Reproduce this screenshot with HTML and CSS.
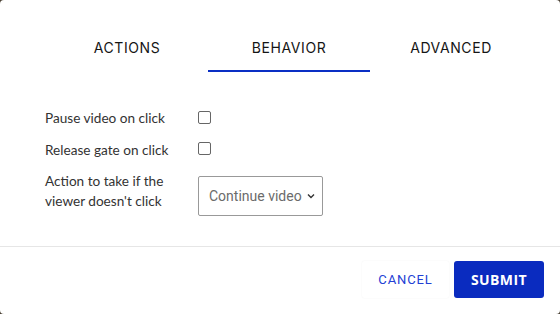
FILE: index.html
```html
<!DOCTYPE html>
<html>
<head>
    <link rel="stylesheet" href="styles.css">
</head>
<body>
    <div class="modal">
        <div class="tabs">
            <div class="tab">ACTIONS</div>
            <div class="tab active">BEHAVIOR</div>
            <div class="tab">ADVANCED</div>
        </div>

        <div class="form">
            <div class="row">
                <label class="label" for="pause">Pause video on click</label>
                <input type="checkbox" id="pause">
            </div>
            <div class="row">
                <label class="label" for="release">Release gate on click</label>
                <input type="checkbox" id="release">
            </div>
            <div class="row">
                <label class="label" for="action">Action to take if the viewer doesn't click</label>
                <div class="select">
                    <span>Continue video</span>
                    <svg width="10" height="10" viewBox="0 0 10 10"><path d="M2 3.5 L5 6.5 L8 3.5" fill="none" stroke="#333" stroke-width="1.4"/></svg>
                </div>
            </div>
        </div>

        <div class="footer">
            <button class="btn cancel">CANCEL</button>
            <button class="btn submit">SUBMIT</button>
        </div>
    </div>
</body>
</html>
```

FILE: styles.css
```css
body { margin: 0; background: #4a4034; }
.modal { width: 560px; height: 314px; background: #fff; border-radius: 4px; display: flex; flex-direction: column; overflow: hidden; }

.tabs { display: flex; margin: 30px 0 0 46px; }
.tab { width: 162px; padding: 9px 0 13px; border-bottom: 2px solid transparent; text-align: center; font-family: Inter, 'Liberation Sans', sans-serif; font-size: 14px; line-height: 18px; letter-spacing: 0.6px; color: #151515; }
.tab.active { border-bottom-color: #0a2fc4; }

.form { display: flex; flex-direction: column; gap: 12px; margin: 37px 0 0 45px; flex: 1; }
.row { display: flex; align-items: flex-start; }
.label { width: 153px; font-family: Lato, 'Open Sans', sans-serif; font-size: 13.6px; line-height: 19.5px; color: #333; }
.row input[type=checkbox] { width: 13px; height: 13px; margin: 1.5px 0 0; appearance: none; border: 1px solid #666; border-radius: 2px; background: #fff; }
.select { width: 107px; height: 38px; margin-top: 4px; border: 1px solid #999; border-radius: 2px; display: flex; align-items: center; justify-content: space-between; padding: 0 6px 0 10px; font-family: Roboto, 'Liberation Sans', sans-serif; font-size: 14px; color: #6b6b6b; }

.footer { border-top: 1px solid #e6e6e6; display: flex; justify-content: flex-end; gap: 5px; padding: 14px 16px 16px; }
.btn { height: 37px; border: none; border-radius: 3px; font-size: 13px; cursor: pointer; }
.cancel { width: 87px; background: #fff; color: #2340d4; font-family: Roboto, 'Liberation Sans', sans-serif; letter-spacing: 0.9px; box-shadow: 0 0 2px rgba(0,0,0,0.06); }
.submit { width: 90px; background: #0a2bbf; color: #fff; font-family: 'Open Sans', sans-serif; font-weight: bold; font-size: 14px; letter-spacing: 0.4px; }
```
